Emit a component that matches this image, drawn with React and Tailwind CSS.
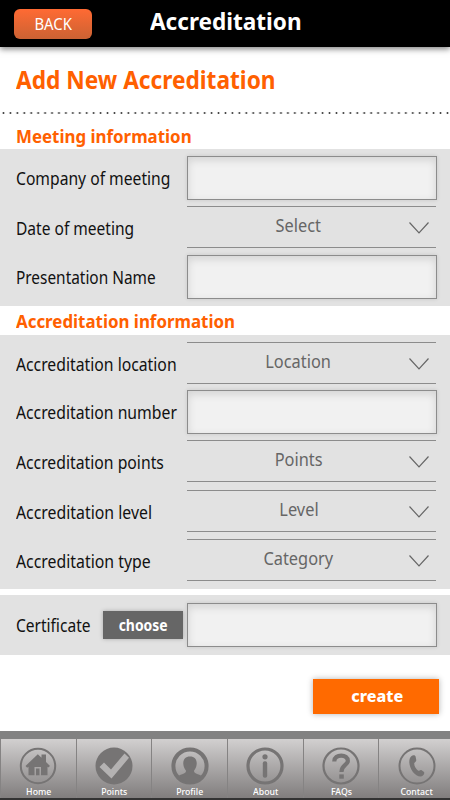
import React from 'react';

const Chevron = () => (
  <svg className="absolute right-[7px] top-[15px] h-3 w-5" viewBox="0 0 20 12" fill="none" stroke="#666" strokeWidth="1.2">
    <path d="M0.5 0.5 L10 10.8 L19.5 0.5" />
  </svg>
);

const TextField = ({ label, className = 'h-11 w-[250px]' }) => (
  <input
    aria-label={label}
    className={`block border-[1.5px] border-[#8c8c8c] bg-[#f1f1f1] shadow-[inset_0_3px_8px_rgba(0,0,0,0.13),0_0_4px_rgba(0,0,0,0.12)] outline-none ${className}`}
  />
);

const SelectField = ({ value }) => (
  <button className="relative block h-[42px] w-[249px] border-y border-[#8c8c8c] pr-[26px] pb-1 text-center text-[17.5px] leading-[36px] text-[#666]">
    <span className="inline-block scale-x-[0.935]">{value}</span>
    <Chevron />
  </button>
);

const Row = ({ label, labelClass, rowClass, children }) => (
  <div className={`flex items-start ${rowClass}`}>
    <div className="w-[171px] whitespace-nowrap text-[17.5px] leading-[44px] text-[#111]">
      <span className={`inline-block origin-left ${labelClass}`}>{label}</span>
    </div>
    {children}
  </div>
);

const SectionTitle = ({ children, className }) => (
  <h3 className={`pl-4 text-[18px] font-bold text-[#ff6000] ${className}`}>
    <span className="inline-block origin-left scale-x-[0.938]">{children}</span>
  </h3>
);

const HomeIcon = () => (
  <>
    <circle cx="19" cy="19" r="17.2" strokeWidth="2" fill="none" stroke="currentColor" />
    <path d="M6.5 19 L18.8 7.3 L22.5 10.8 V7.6 H27 V15 L31 19 L29.3 20.5 L28.5 19.8 V28.3 H22 V20 H15.5 V28.3 H9.5 V19.8 L8.2 20.8 Z" fill="currentColor" />
    <path d="M17 28.3 V21.5 H20.5 V28.3 Z" fill="currentColor" />
  </>
);

const PointsIcon = () => (
  <>
    <circle cx="19" cy="19" r="18.5" fill="currentColor" />
    <path d="M4.5 20 L9 15.5 L16 22.5 L29.5 6.5 L34 10.8 L16.5 31.5 Z" fill="#b4b2b2" />
  </>
);

const ProfileIcon = () => (
  <>
    <circle cx="19" cy="19" r="16.6" strokeWidth="4" fill="none" stroke="currentColor" />
    <path d="M19 9.5 C23.5 9.5 26 12.5 25.7 17 C25.5 20.5 24 22 23 23.7 C23 26 25 26.5 30 28.5 C28 34 23 36 19 36 C15 36 10 34 8 28.5 C13 26.5 15 26 15 23.7 C14 22 12.5 20.5 12.3 17 C12 12.5 14.5 9.5 19 9.5 Z" fill="currentColor" />
  </>
);

const AboutIcon = () => (
  <>
    <circle cx="19" cy="19" r="17" strokeWidth="3.2" fill="none" stroke="currentColor" />
    <circle cx="19" cy="9.8" r="2.6" fill="currentColor" />
    <rect x="16.8" y="14.3" width="4.4" height="16.4" rx="2" fill="currentColor" />
  </>
);

const FaqIcon = () => (
  <>
    <circle cx="19" cy="19" r="17.5" strokeWidth="2.2" fill="none" stroke="currentColor" />
    <path d="M12.3 14.5 C12 6.5 26.5 6.7 25.8 14.3 C25.5 18.2 19.3 18.3 19.5 25" fill="none" stroke="currentColor" strokeWidth="4.2" />
    <rect x="17.3" y="27.4" width="4.5" height="4.3" fill="currentColor" />
  </>
);

const ContactIcon = () => (
  <>
    <circle cx="19" cy="19" r="17.5" strokeWidth="2" fill="none" stroke="currentColor" />
    <path d="M13.3 9.3 C15 7.5 17 8 17.6 9.5 L18.3 13.3 C18.3 15 16.3 15.3 16.2 16.5 C16.3 19.5 18 22 20.2 23.7 C21.3 24 22 22.5 23.3 23 L26 25 C27 26.5 25 29.3 22.6 29.6 C17 29.5 11.5 22 11.3 15 C11.3 12.5 12 10.5 13.3 9.3 Z" fill="currentColor" />
  </>
);

const tabs = [
  { name: 'Home', icon: HomeIcon },
  { name: 'Points', icon: PointsIcon },
  { name: 'Profile', icon: ProfileIcon },
  { name: 'About', icon: AboutIcon },
  { name: 'FAQs', icon: FaqIcon },
  { name: 'Contact', icon: ContactIcon },
];

const TabBar = () => (
  <nav className="mt-auto h-[69px] border-t-8 border-[#828282] bg-[#828282]">
    <div className="flex h-[61px] border-b-2 border-[#333] bg-linear-to-b from-[#d2d0d0] to-[#817e7e]">
      {tabs.map(({ name, icon: Icon }) => (
        <button key={name} className="flex w-[75.7px] shrink-0 flex-col items-center border-l border-[#858383] pt-[8px]">
          <svg className="h-[38px] w-[38px] shrink-0 text-[#767474]" viewBox="0 0 38 38">
            <Icon />
          </svg>
          <span className="inline-block scale-x-[0.92] text-[9.5px] leading-[13px] font-medium text-white">{name}</span>
        </button>
      ))}
    </div>
  </nav>
);

export default function App() {
  return (
    <div className="flex h-[800px] w-[450px] flex-col overflow-hidden bg-white font-['Noto_Sans','Open_Sans',sans-serif]">
      <header className="flex h-[47px] shrink-0 bg-black pl-3.5 shadow-[0_2px_6px_rgba(0,0,0,0.5)]">
        <button className="mt-[9px] h-[30px] w-[78px] rounded-md bg-linear-to-b from-[#ff6a33] to-[#cc6233] text-center text-[16px] leading-[28px] text-white">
          <span className="inline-block scale-x-[0.93]">BACK</span>
        </button>
        <h1 className="ml-[58px] text-[24px] leading-[42px] font-bold text-white">
          <span className="inline-block origin-left scale-x-[0.94]">Accreditation</span>
        </h1>
      </header>

      <h2 className="h-[65px] shrink-0 pl-4 pt-4 text-[24.5px] leading-[34px] font-bold text-[#ff6000]">
        <span className="inline-block origin-left scale-x-[0.926]">Add New Accreditation</span>
      </h2>
      <div className="h-0.5 shrink-0 bg-[radial-gradient(circle,#444_0.9px,transparent_1.2px)] bg-size-[6.95px_2px]" />

      <SectionTitle className="h-[35px] shrink-0 leading-[44px]">Meeting information</SectionTitle>
      <section className="h-[157px] shrink-0 bg-[#e2e2e2] pl-4 pt-[7px]">
        <Row label="Company of meeting" labelClass="scale-x-[0.895]" rowClass="h-[50px]">
          <TextField label="Company of meeting" />
        </Row>
        <Row label="Date of meeting" labelClass="scale-x-[0.888]" rowClass="h-[49px]">
          <SelectField value="Select" />
        </Row>
        <Row label="Presentation Name" labelClass="scale-x-[0.88]" rowClass="h-11">
          <TextField label="Presentation Name" />
        </Row>
      </section>

      <SectionTitle className="h-[29px] shrink-0 leading-[31px]">Accreditation information</SectionTitle>
      <section className="h-[254px] shrink-0 bg-[#e2e2e2] pl-4 pt-[7px]">
        <Row label="Accreditation location" labelClass="scale-x-[0.9]" rowClass="h-12">
          <SelectField value="Location" />
        </Row>
        <Row label="Accreditation number" labelClass="scale-x-[0.9]" rowClass="h-[50px]">
          <TextField label="Accreditation number" />
        </Row>
        <Row label="Accreditation points" labelClass="scale-x-[0.9]" rowClass="h-[50px]">
          <SelectField value="Points" />
        </Row>
        <Row label="Accreditation level" labelClass="scale-x-[0.905]" rowClass="h-[49px]">
          <SelectField value="Level" />
        </Row>
        <Row label="Accreditation type" labelClass="scale-x-[0.905]" rowClass="h-[42px]">
          <SelectField value="Category" />
        </Row>
      </section>

      <section className="mt-1.5 flex h-[60px] shrink-0 bg-[#e2e2e2] pl-4 pt-2">
        <div className="w-[87px] text-[17.5px] leading-[44px] text-[#111]">
          <span className="inline-block origin-left scale-x-[0.888]">Certificate</span>
        </div>
        <button className="mt-2 h-7 w-20 bg-[#666] text-center text-[16px] leading-[27px] font-bold text-white shadow-[0_0_4px_rgba(0,0,0,0.25)]">
          <span className="inline-block scale-x-[0.87]">choose</span>
        </button>
        <TextField label="Certificate" className="ml-1 h-11 w-[250px]" />
      </section>

      <div className="flex justify-end pr-[11px] pt-6">
        <button className="h-[35px] w-[126px] bg-[#ff6a00] pl-[3px] text-center text-[15px] leading-[33px] font-extrabold text-white shadow-[0_0_6px_rgba(0,0,0,0.3)]">
          <span className="inline-block scale-x-[1.07]">create</span>
        </button>
      </div>

      <TabBar />
    </div>
  );
}
